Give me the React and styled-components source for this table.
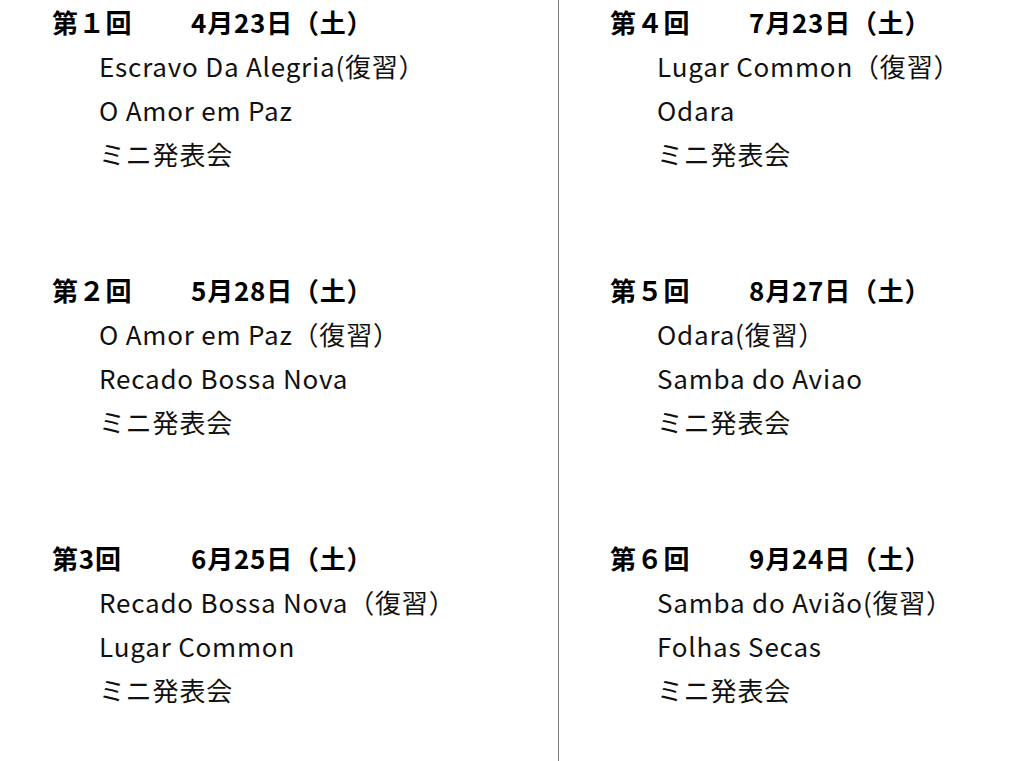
import React from 'react'
import styled, { createGlobalStyle } from 'styled-components'

const lessons = [
  [
    { no: '第１回', date: '4月23日（土）', items: ['Escravo Da Alegria(復習）', 'O Amor em Paz', 'ミニ発表会'] },
    { no: '第２回', date: '5月28日（土）', items: ['O Amor em Paz（復習）', 'Recado Bossa Nova', 'ミニ発表会'] },
    { no: '第3回', date: '6月25日（土）', items: ['Recado Bossa Nova（復習）', 'Lugar Common', 'ミニ発表会'] },
  ],
  [
    { no: '第４回', date: '7月23日（土）', items: ['Lugar Common（復習）', 'Odara', 'ミニ発表会'] },
    { no: '第５回', date: '8月27日（土）', items: ['Odara(復習）', 'Samba do Aviao', 'ミニ発表会'] },
    { no: '第６回', date: '9月24日（土）', items: ['Samba do Avião(復習）', 'Folhas Secas', 'ミニ発表会'] },
  ],
]

const GlobalStyle = createGlobalStyle`
  html, body {
    margin: 0;
    background: #ffffff;
  }
  body {
    font-family: "Noto Sans CJK JP", "Noto Sans", sans-serif;
    color: #111;
  }
`

const Page = styled.div`
  display: grid;
  grid-template-columns: 558px 1fr;
  height: 761px;
  overflow: hidden;
`

const Column = styled.div`
  display: flex;
  flex-direction: column;
  gap: 92px;
  padding-left: ${(p) => (p.$right ? '51px' : '52px')};
  border-left: ${(p) => (p.$right ? '1px solid #7a7a7a' : 'none')};
`

const Block = styled.section`
  display: flex;
  flex-direction: column;
`

const Header = styled.div`
  display: grid;
  grid-template-columns: 139px auto;
  height: 44px;
  line-height: 44px;
  font-size: 26px;
  font-weight: 700;
  letter-spacing: 0.8px;
  color: #000;
`

const Item = styled.div`
  height: 44px;
  line-height: 44px;
  padding-left: 47px;
  font-size: 26px;
  letter-spacing: 0.8px;
  white-space: nowrap;
`

export default function App() {
  return (
    <>
      <GlobalStyle />
      <Page>
        {lessons.map((col, ci) => (
          <Column key={ci} $right={ci === 1}>
            {col.map((l) => (
              <Block key={l.no}>
                <Header>
                  <span>{l.no}</span>
                  <span>{l.date}</span>
                </Header>
                {l.items.map((t, i) => (
                  <Item key={i}>{t}</Item>
                ))}
              </Block>
            ))}
          </Column>
        ))}
      </Page>
    </>
  )
}
